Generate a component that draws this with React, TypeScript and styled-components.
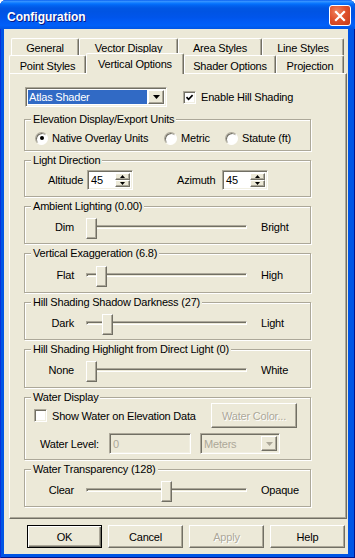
import React from "react";
import styled, { createGlobalStyle, css } from "styled-components";

const FACE = "#ECE9D8";
const SHADOW = "#ACA899";
const DARK = "#716F64";
const GRAY_TEXT = "#ACA899";

const GlobalStyle = createGlobalStyle`
  html, body { margin: 0; padding: 0; }
  body {
    font-family: "Liberation Sans", Arial, sans-serif;
    font-size: 11px;
    letter-spacing: -0.2px;
    color: #000;
    background: #fff;
  }
`;

const sunken = css`
  border-style: solid;
  border-width: 1px;
  border-color: ${SHADOW} #fff #fff ${SHADOW};
  box-shadow: inset 1px 1px 0 ${DARK}, inset -1px -1px 0 #f1efe2;
`;

const raised = css`
  border-style: solid;
  border-width: 1px;
  border-color: #fff ${DARK} ${DARK} #fff;
  box-shadow: inset -1px -1px 0 ${SHADOW};
`;

const Window = styled.div`
  width: 355px;
  height: 558px;
  display: flex;
  flex-direction: column;
  background: #0055e5;
  border-radius: 6px 6px 0 0;
  box-shadow: inset 1px 0 0 #0831d9, inset -1px -1px 0 #00138c;
  overflow: hidden;
`;

const TitleBar = styled.div`
  height: 29px;
  flex: none;
  box-sizing: border-box;
  display: flex;
  align-items: center;
  justify-content: space-between;
  padding: 2px 4px 0 7px;
  background: linear-gradient(
    to bottom,
    #0058ee 0%,
    #3a93ff 4%,
    #288eff 7%,
    #127dff 10%,
    #036ffc 14%,
    #0262ee 20%,
    #0057e5 28%,
    #0054e3 40%,
    #0055eb 60%,
    #005bf5 75%,
    #0060f8 88%,
    #0055e5 100%
  );
`;

const Title = styled.span`
  font: bold 12px "Liberation Sans", Arial, sans-serif;
  letter-spacing: 0;
  color: #fff;
  text-shadow: 1px 1px 0 #0a1883;
  margin-top: 2px;
`;

const CloseButton = styled.div`
  width: 22px;
  height: 21px;
  box-sizing: border-box;
  border: 1px solid #fff;
  border-radius: 3px;
  background: radial-gradient(circle at 35% 30%, #f0845f 0%, #e0512c 45%, #c23a18 100%);
  display: flex;
  align-items: center;
  justify-content: center;
`;

const Client = styled.div`
  flex: 1;
  margin: 0 7px 4px 4px;
  background: ${FACE};
  padding: 9px 0 0 5px;
  display: flex;
  flex-direction: column;
`;

const TabRow = styled.div<{ $indent: number; $front?: boolean }>`
  display: flex;
  height: ${({ $front }) => ($front ? 18 : 17)}px;
  align-items: ${({ $front }) => ($front ? "flex-end" : "stretch")};
  padding-left: ${({ $indent }) => $indent}px;
`;

const Tab = styled.div<{ $w: number; $active?: boolean }>`
  width: ${({ $w }) => $w}px;
  height: ${({ $active }) => ($active ? "21px" : "100%")};
  flex: none;
  box-sizing: border-box;
  display: flex;
  align-items: center;
  justify-content: center;
  padding-top: 2px;
  background: ${FACE};
  border-top: 1px solid #fff;
  border-left: 1px solid #fff;
  border-right: 1px solid ${DARK};
  border-radius: 2px 2px 0 0;
  box-shadow: inset -1px 0 0 ${SHADOW};
  white-space: nowrap;
  ${({ $active }) =>
    $active &&
    css`
      position: relative;
      z-index: 1;
      margin-bottom: -1px;
      padding-top: 0;
    `}
`;

const Panel = styled.div`
  width: 338px;
  height: 446px;
  box-sizing: border-box;
  border-top: 1px solid #fff;
  border-left: 1px solid #fff;
  border-right: 1px solid ${DARK};
  border-bottom: 1px solid ${DARK};
  box-shadow: inset -1px -1px 0 ${SHADOW};
  padding: 13px 0 0 14px;
  display: flex;
  flex-direction: column;
`;

const TopRow = styled.div`
  display: flex;
  align-items: center;
  height: 20px;
  padding-left: 1px;
  gap: 16px;
`;

const Combo = styled.div<{ $w: number; $h: number; $disabled?: boolean }>`
  width: ${({ $w }) => $w}px;
  height: ${({ $h }) => $h}px;
  box-sizing: border-box;
  ${sunken};
  background: ${({ $disabled }) => ($disabled ? FACE : "#fff")};
  padding: 2px;
  display: flex;
  flex: none;
`;

const ComboValue = styled.div<{ $selected?: boolean; $disabled?: boolean }>`
  flex: 1;
  margin-right: 1px;
  padding-left: 1px;
  display: flex;
  align-items: center;
  background: ${({ $selected }) => ($selected ? "#316ac5" : "transparent")};
  color: ${({ $selected, $disabled }) => ($selected ? "#fff" : $disabled ? GRAY_TEXT : "#000")};
`;

const DropButton = styled.div`
  width: 16px;
  box-sizing: border-box;
  ${raised};
  background: ${FACE};
  display: flex;
  align-items: center;
  justify-content: center;
`;

const CheckLabel = styled.label<{ $disabled?: boolean }>`
  display: flex;
  align-items: center;
  gap: 5px;
  color: ${({ $disabled }) => ($disabled ? GRAY_TEXT : "#000")};
`;

const CheckBox = styled.span`
  width: 13px;
  height: 13px;
  box-sizing: border-box;
  flex: none;
  ${sunken};
  background: #fff;
  display: flex;
  align-items: center;
  justify-content: center;
`;

const Groups = styled.div`
  display: flex;
  flex-direction: column;
  gap: 9px;
  margin-top: 12px;
`;

const GroupBox = styled.div<{ $h: number }>`
  width: 287px;
  height: ${({ $h }) => $h}px;
  box-sizing: border-box;
  border: 1px solid ${SHADOW};
  box-shadow: inset 1px 1px 0 #fff, 1px 1px 0 #fff;
  display: flex;
  flex-direction: column;
`;

const Legend = styled.div`
  align-self: flex-start;
  height: 13px;
  line-height: 13px;
  margin: -7px 0 0 6px;
  padding: 0 2px;
  background: ${FACE};
  white-space: nowrap;
`;

const GroupBody = styled.div<{ $top?: boolean }>`
  flex: 1;
  display: flex;
  flex-direction: column;
  justify-content: ${({ $top }) => ($top ? "flex-start" : "center")};
`;

const RadioRow = styled.div`
  display: grid;
  grid-template-columns: 129px 61px auto;
  padding-left: 10px;
`;

const RadioItem = styled.label`
  display: flex;
  align-items: center;
  gap: 4px;
  height: 13px;
`;

const RadioCircle = styled.span<{ $on?: boolean }>`
  width: 13px;
  height: 13px;
  box-sizing: border-box;
  flex: none;
  border-radius: 50%;
  border: 1px solid;
  border-color: ${SHADOW} #fff #fff ${SHADOW};
  box-shadow: inset 1px 1px 0 ${DARK};
  background: #fff;
  display: flex;
  align-items: center;
  justify-content: center;
  &::after {
    content: "";
    width: 4px;
    height: 4px;
    border-radius: 50%;
    background: ${({ $on }) => ($on ? "#000" : "transparent")};
  }
`;

const SpinRow = styled.div`
  display: grid;
  grid-template-columns: 39px 46px 44px 45px 46px;
  align-items: center;
  padding: 0 0 3px 23px;
`;

const SpinBox = styled.div`
  width: 46px;
  height: 20px;
  box-sizing: border-box;
  ${sunken};
  background: #fff;
  display: flex;
  padding: 2px;
`;

const SpinText = styled.div`
  flex: 1;
  padding-left: 1px;
  display: flex;
  align-items: center;
`;

const SpinButtons = styled.div`
  width: 15px;
  display: flex;
  flex-direction: column;
`;

const SpinButton = styled.div`
  flex: 1;
  box-sizing: border-box;
  ${raised};
  background: ${FACE};
  display: flex;
  align-items: center;
  justify-content: center;
`;

const SliderRow = styled.div`
  display: flex;
  align-items: flex-start;
  height: 21px;
`;

const SliderLabel = styled.div<{ $end?: boolean }>`
  margin-top: 3px;
  line-height: 13px;
  white-space: nowrap;
  ${({ $end }) =>
    $end
      ? css`
          margin-left: 14px;
        `
      : css`
          width: 49px;
          text-align: right;
          margin-right: 12px;
        `}
`;

const Track = styled.div`
  width: 161px;
  height: 21px;
  flex: none;
  position: relative;
`;

const Channel = styled.div`
  margin-top: 7px;
  height: 4px;
  box-sizing: border-box;
  border-style: solid;
  border-width: 1px;
  border-color: ${SHADOW} #fff #fff ${SHADOW};
  box-shadow: inset 1px 1px 0 ${DARK};
  background: ${FACE};
`;

const Thumb = styled.div`
  position: absolute;
  top: 0;
  width: 11px;
  height: 21px;
  box-sizing: border-box;
  ${raised};
  background: ${FACE};
`;

const WaterRow = styled.div<{ $cols: string; $mt: number; $h: number }>`
  display: grid;
  grid-template-columns: ${({ $cols }) => $cols};
  align-items: center;
  height: ${({ $h }) => $h}px;
  margin-top: ${({ $mt }) => $mt}px;
`;

const Cell = styled.div<{ $pl?: number }>`
  padding-left: ${({ $pl }) => $pl ?? 0}px;
  white-space: nowrap;
`;

const TextInput = styled.div<{ $w: number }>`
  width: ${({ $w }) => $w}px;
  height: 21px;
  box-sizing: border-box;
  ${sunken};
  background: ${FACE};
  color: ${GRAY_TEXT};
  padding: 0 3px;
  display: flex;
  align-items: center;
`;

const ButtonRow = styled.div`
  width: 338px;
  display: flex;
  justify-content: flex-end;
  gap: 6px;
  padding-right: 2px;
  box-sizing: border-box;
  margin-top: 6px;
`;

const Button = styled.div<{ $w?: number; $h?: number; $default?: boolean; $disabled?: boolean }>`
  width: ${({ $w }) => $w ?? 75}px;
  height: ${({ $h }) => $h ?? 23}px;
  box-sizing: border-box;
  display: flex;
  align-items: center;
  justify-content: center;
  background: ${FACE};
  color: ${({ $disabled }) => ($disabled ? GRAY_TEXT : "#000")};
  text-shadow: ${({ $disabled }) => ($disabled ? "1px 1px 0 #fff" : "none")};
  ${({ $default }) =>
    $default
      ? css`
          border: 1px solid #000;
          box-shadow: inset 1px 1px 0 #fff, inset -1px -1px 0 ${DARK}, inset -2px -2px 0 ${SHADOW};
        `
      : raised}
`;

const DownArrow = ({ color = "#000" }: { color?: string }) => (
  <svg width="7" height="4" viewBox="0 0 7 4">
    <path d="M0 0H7L3.5 4Z" fill={color} />
  </svg>
);

const SpinArrow = ({ up }: { up?: boolean }) => (
  <svg width="5" height="3" viewBox="0 0 5 3">
    <path d={up ? "M0 3H5L2.5 0Z" : "M0 0H5L2.5 3Z"} fill="#000" />
  </svg>
);

const Check = () => (
  <svg width="9" height="9" viewBox="0 0 9 9">
    <path d="M1.5 4.2L3.6 6.3L7.6 2.2" fill="none" stroke="#000" strokeWidth="1.7" />
  </svg>
);

const Group = ({ title, h, top, children }: { title: string; h: number; top?: boolean; children: React.ReactNode }) => (
  <GroupBox $h={h}>
    <Legend>{title}</Legend>
    <GroupBody $top={top}>{children}</GroupBody>
  </GroupBox>
);

const Spin = ({ value }: { value: string }) => (
  <SpinBox>
    <SpinText>{value}</SpinText>
    <SpinButtons>
      <SpinButton>
        <SpinArrow up />
      </SpinButton>
      <SpinButton>
        <SpinArrow />
      </SpinButton>
    </SpinButtons>
  </SpinBox>
);

const Slider = ({ min, max, value, range }: { min: string; max: string; value: number; range: number }) => (
  <SliderRow>
    <SliderLabel>{min}</SliderLabel>
    <Track>
      <Channel />
      <Thumb style={{ left: Math.round((value / range) * (161 - 11)) }} />
    </Track>
    <SliderLabel $end>{max}</SliderLabel>
  </SliderRow>
);

const backTabs = [
  { label: "General", w: 68 },
  { label: "Vector Display", w: 99 },
  { label: "Area Styles", w: 84 },
  { label: "Line Styles", w: 82 },
];

const frontTabs = [
  { label: "Point Styles", w: 77 },
  { label: "Vertical Options", w: 98, active: true },
  { label: "Shader Options", w: 92 },
  { label: "Projection", w: 68 },
];

const lightingSliders = [
  { title: "Ambient Lighting (0.00)", min: "Dim", max: "Bright", value: 0, range: 100, h: 38 },
  { title: "Vertical Exaggeration (6.8)", min: "Flat", max: "High", value: 6.8, range: 100, h: 40 },
  { title: "Hill Shading Shadow Darkness (27)", min: "Dark", max: "Light", value: 27, range: 255, h: 38 },
  { title: "Hill Shading Highlight from Direct Light (0)", min: "None", max: "White", value: 0, range: 255, h: 39 },
];

export default function App() {
  return (
    <>
      <GlobalStyle />
      <Window>
        <TitleBar>
          <Title>Configuration</Title>
          <CloseButton>
            <svg width="12" height="12" viewBox="0 0 12 12">
              <path d="M2 2L10 10M10 2L2 10" stroke="#fff" strokeWidth="2.2" strokeLinecap="square" />
            </svg>
          </CloseButton>
        </TitleBar>
        <Client>
          <TabRow $indent={2}>
            {backTabs.map((t) => (
              <Tab key={t.label} $w={t.w}>
                {t.label}
              </Tab>
            ))}
          </TabRow>
          <TabRow $indent={0} $front>
            {frontTabs.map((t) => (
              <Tab key={t.label} $w={t.w} $active={t.active}>
                {t.label}
              </Tab>
            ))}
          </TabRow>
          <Panel>
            <TopRow>
              <Combo $w={142} $h={20}>
                <ComboValue $selected>Atlas Shader</ComboValue>
                <DropButton>
                  <DownArrow />
                </DropButton>
              </Combo>
              <CheckLabel>
                <CheckBox>
                  <Check />
                </CheckBox>
                Enable Hill Shading
              </CheckLabel>
            </TopRow>

            <Groups>
              <Group title="Elevation Display/Export Units" h={32}>
                <RadioRow>
                  <RadioItem>
                    <RadioCircle $on />
                    Native Overlay Units
                  </RadioItem>
                  <RadioItem>
                    <RadioCircle />
                    Metric
                  </RadioItem>
                  <RadioItem>
                    <RadioCircle />
                    Statute (ft)
                  </RadioItem>
                </RadioRow>
              </Group>

              <Group title="Light Direction" h={37}>
                <SpinRow>
                  <span>Altitude</span>
                  <Spin value="45" />
                  <span />
                  <span>Azimuth</span>
                  <Spin value="45" />
                </SpinRow>
              </Group>

              {lightingSliders.map((s) => (
                <Group key={s.title} title={s.title} h={s.h}>
                  <Slider min={s.min} max={s.max} value={s.value} range={s.range} />
                </Group>
              ))}

              <Group title="Water Display" h={63} top>
                <WaterRow $cols="186px 86px" $mt={-1} $h={25}>
                  <Cell $pl={9}>
                    <CheckLabel>
                      <CheckBox />
                      Show Water on Elevation Data
                    </CheckLabel>
                  </Cell>
                  <Button $w={86} $h={25} $disabled>
                    Water Color...
                  </Button>
                </WaterRow>
                <WaterRow $cols="84px 82px 9px 80px" $mt={5} $h={21}>
                  <Cell $pl={15}>Water Level:</Cell>
                  <TextInput $w={82}>0</TextInput>
                  <span />
                  <Combo $w={80} $h={21} $disabled>
                    <ComboValue $disabled>Meters</ComboValue>
                    <DropButton>
                      <DownArrow color={GRAY_TEXT} />
                    </DropButton>
                  </Combo>
                </WaterRow>
              </Group>

              <Group title="Water Transparency (128)" h={38}>
                <Slider min="Clear" max="Opaque" value={128} range={255} />
              </Group>
            </Groups>
          </Panel>

          <ButtonRow>
            <Button $default>OK</Button>
            <Button>Cancel</Button>
            <Button $disabled>Apply</Button>
            <Button>Help</Button>
          </ButtonRow>
        </Client>
      </Window>
    </>
  );
}
